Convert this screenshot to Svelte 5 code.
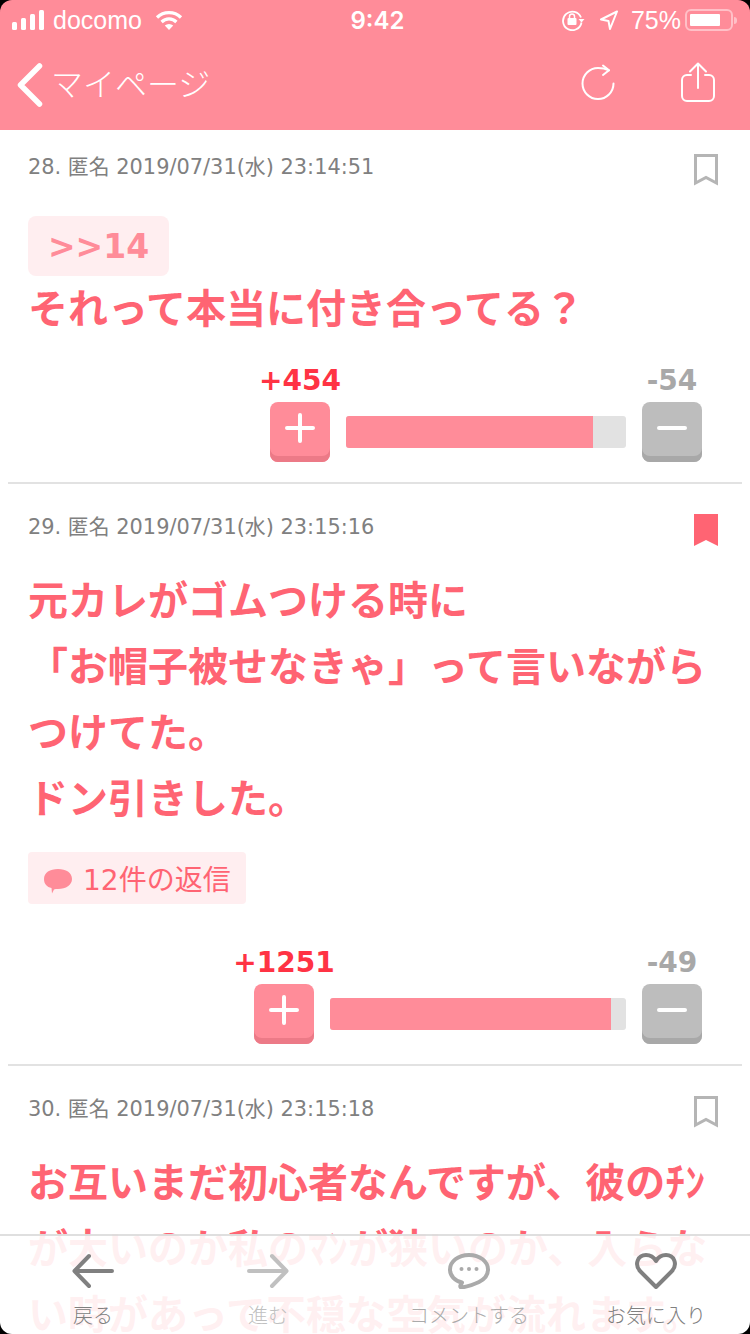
<script>
	const posts = [
		{
			meta: '28. 匿名 2019/07/31(水) 23:14:51',
			saved: false,
			quote: '>>14',
			lines: ['それって本当に付き合ってる？'],
			plus: 454,
			minus: 54,
			barWidth: 280,
			ratio: 88.2
		},
		{
			meta: '29. 匿名 2019/07/31(水) 23:15:16',
			saved: true,
			lines: ['元カレがゴムつける時に', '「お帽子被せなきゃ」って言いながら', 'つけてた。', 'ドン引きした。'],
			replies: 12,
			plus: 1251,
			minus: 49,
			barWidth: 296,
			ratio: 95
		},
		{
			meta: '30. 匿名 2019/07/31(水) 23:15:18',
			saved: false,
			lines: ['お互いまだ初心者なんですが、彼のﾁﾝが大いのか私のﾏﾝが狭いのか、入らない時があって不穏な空気が流れます。']
		}
	];
</script>

<div class="phone">
	<header class="head">
		<div class="status">
			<div class="status-left">
				<svg width="32" height="20" viewBox="0 0 32 20" fill="#fff">
					<rect x="0" y="12" width="5" height="8" rx="1.5" />
					<rect x="9" y="8" width="5" height="12" rx="1.5" />
					<rect x="18" y="4" width="5" height="16" rx="1.5" />
					<rect x="27" y="0" width="5" height="20" rx="1.5" />
				</svg>
				<span class="carrier">docomo</span>
				<svg class="wifi" width="28" height="20" viewBox="0 0 28 20" fill="none" stroke="#fff" stroke-width="3.2">
					<path d="M2 7.5a17 17 0 0 1 24 0" />
					<path d="M6.6 12a10.5 10.5 0 0 1 14.8 0" />
					<path d="M14 20l-4.2-4.4a6 6 0 0 1 8.4 0z" fill="#fff" stroke="none" />
				</svg>
			</div>
			<div class="time">9:42</div>
			<div class="status-right">
				<svg width="24" height="22" viewBox="0 0 24 22" fill="none" stroke="#fff" stroke-width="1.8">
					<path d="M20 8.500a9.300 9.300 0 1 0 .5 5" />
					<path d="M17.500 10h6l-3 3.500z" fill="#fff" stroke="none" />
					<rect x="6.500" y="9" width="9" height="7" rx="1" fill="#fff" stroke="none" />
					<path d="M8.500 9V7.500a2.500 2.500 0 0 1 5 0V9" stroke-width="1.500" />
				</svg>
				<svg class="loc" width="18" height="20" viewBox="0 0 18 20" fill="none" stroke="#fff" stroke-width="2" stroke-linejoin="round">
					<path d="M17 1.500L1 9.500l7.500 1.500 1.500 8z" />
				</svg>
				<span class="pct">75%</span>
				<div class="battery"><div class="battery-fill"></div></div>
				<div class="battery-nub"></div>
			</div>
		</div>
		<nav class="nav">
			<svg class="chev" width="26" height="44" viewBox="0 0 26 44" fill="none" stroke="#fff" stroke-width="5.500" stroke-linecap="round" stroke-linejoin="round">
				<path d="M22.500 3L3.500 22l19 19" />
			</svg>
			<span class="nav-title">マイページ</span>
			<svg class="reload" width="36" height="36" viewBox="0 0 36 36" fill="none" stroke="#fff" stroke-width="2" stroke-linecap="round" stroke-linejoin="round">
				<path d="M29 6.300Q24 4 18 4A15.500 15.500 0 1 0 33.500 19.500" />
				<path d="M23 1.500l6 4.800-6 4.700" />
			</svg>
			<svg class="share" width="34" height="40" viewBox="0 0 34 40" fill="none" stroke="#fff" stroke-width="2" stroke-linecap="round" stroke-linejoin="round">
				<path d="M10 13H6a5 5 0 0 0-5 5v16a5 5 0 0 0 5 5h22a5 5 0 0 0 5-5V18a5 5 0 0 0-5-5h-4" />
				<path d="M17 26V2M9 9.500L17 1.500l8 8" />
			</svg>
		</nav>
	</header>

	{#each posts as post}
		<article class="post">
			<div class="meta-row">
				<span class="meta">{post.meta}</span>
				<svg class="mark" width="24" height="32" viewBox="0 0 24 32">
					{#if post.saved}
						<path d="M0 0h24v32l-12-6-12 6z" fill="#ff6473" />
					{:else}
						<path d="M1.500 1.500h21v27.500l-10.500-5.500-10.500 5.500z" fill="none" stroke="#b5b5b5" stroke-width="3" />
					{/if}
				</svg>
			</div>
			<div class="content">
				{#if post.quote}
					<div class="quote">{post.quote}</div>
				{/if}
				<p class="body">
					{#each post.lines as line, i}
						{#if i > 0}<br />{/if}{line}
					{/each}
				</p>
				{#if post.replies}
					<div class="replies">
						<svg width="28" height="25" viewBox="0 0 28 25">
							<path d="M14 0c8 0 14 3.500 14 10 0 6-6 10-14 10-1.500 0-3 0-4 .5L8 24.500l-.5-5.500C3 18 0 15 0 10 0 3.500 6 0 14 0z" fill="#ff8c99" />
						</svg>
						<span>{post.replies}件の返信</span>
					</div>
				{/if}
			</div>
			{#if post.plus}
				<div class="votes">
					<div class="vote">
						<span class="count count-plus">+{post.plus}</span>
						<div class="btn btn-plus">
							<svg width="32" height="32" viewBox="0 0 32 32" stroke="#fff" stroke-width="4" stroke-linecap="round">
								<path d="M16 3v26M3 16h26" />
							</svg>
						</div>
					</div>
					<div class="bar" style="width: {post.barWidth}px">
						<div class="bar-fill" style="width: {post.ratio}%"></div>
					</div>
					<div class="vote">
						<span class="count count-minus">-{post.minus}</span>
						<div class="btn btn-minus">
							<svg width="32" height="32" viewBox="0 0 32 32" stroke="#fff" stroke-width="4" stroke-linecap="round">
								<path d="M3 16h26" />
							</svg>
						</div>
					</div>
				</div>
			{/if}
		</article>
	{/each}

	<footer class="tabs">
		<div class="tab tab-dark">
			<svg width="42" height="34" viewBox="0 0 42 34" fill="none" stroke="currentColor" stroke-width="4" stroke-linecap="round" stroke-linejoin="round">
				<path d="M40 17H3M17 2L2.500 17 17 32" />
			</svg>
			<span>戻る</span>
		</div>
		<div class="tab tab-off">
			<svg width="42" height="34" viewBox="0 0 42 34" fill="none" stroke="currentColor" stroke-width="4" stroke-linecap="round" stroke-linejoin="round">
				<path d="M2 17h37M25 2l14.500 15L25 32" />
			</svg>
			<span>進む</span>
		</div>
		<div class="tab tab-mid">
			<svg width="42" height="36" viewBox="0 0 42 36" fill="none">
				<path d="M21 2c11 0 19 6.500 19 14.500 0 6-4 10-9 12.500-4 2-10 4-17 5.500-1.500.3-2-1-1.500-2l1.500-3C7 28 2 23 2 16.500 2 8.500 10 2 21 2z" stroke="currentColor" stroke-width="4" stroke-linejoin="round" />
				<circle cx="13.500" cy="16" r="2" fill="currentColor" />
				<circle cx="21" cy="16" r="2" fill="currentColor" />
				<circle cx="28.500" cy="16" r="2" fill="currentColor" />
			</svg>
			<span>コメントする</span>
		</div>
		<div class="tab tab-dark">
			<svg width="42" height="36" viewBox="0 0 42 36" fill="none" stroke="currentColor" stroke-width="4" stroke-linejoin="round">
				<path d="M21 34L5 18C-1 11 3 2 11 2c4.500 0 8 2.500 10 6 2-3.500 5.500-6 10-6 8 0 12 9 6 16z" />
			</svg>
			<span>お気に入り</span>
		</div>
	</footer>

	<div class="corners"></div>
</div>

<style>
	:global(body) {
		margin: 0;
		background: #fff;
	}

	.phone {
		position: relative;
		width: 750px;
		height: 1334px;
		overflow: hidden;
		background: #fff;
		font-family: 'DejaVu Sans', 'Noto Sans CJK JP', sans-serif;
	}

	/* header */
	.head {
		height: 130px;
		background: #ff8c99;
		color: #fff;
	}

	.status {
		display: grid;
		grid-template-columns: 1fr auto 1fr;
		align-items: center;
		height: 40px;
		padding: 0 7px 0 12px;
		box-sizing: border-box;
		font-family: 'Liberation Sans', sans-serif;
	}

	.status-left {
		display: flex;
		align-items: center;
	}

	.carrier {
		margin-left: 9px;
		font-size: 25px;
	}

	.wifi {
		margin-left: 13px;
	}

	.time {
		font-family: Inter, sans-serif;
		font-size: 24px;
		font-weight: 600;
	}

	.status-right {
		display: flex;
		align-items: center;
		justify-content: flex-end;
		margin-right: 6px;
	}

	.loc {
		margin-left: 15px;
	}

	.pct {
		margin-left: 13px;
		font-size: 25px;
	}

	.battery {
		width: 48px;
		height: 22px;
		margin-left: 4px;
		padding: 3px;
		box-sizing: border-box;
		border: 2px solid rgba(255, 255, 255, 0.45);
		border-radius: 6px;
	}

	.battery-fill {
		width: 30px;
		height: 100%;
		background: #fff;
		border-radius: 1px;
	}

	.battery-nub {
		width: 3px;
		height: 7px;
		margin-left: 1px;
		background: rgba(255, 255, 255, 0.45);
		border-radius: 0 3px 3px 0;
	}

	.nav {
		display: flex;
		align-items: center;
		height: 90px;
		padding-left: 17px;
	}

	.nav-title {
		margin: 0 0 7px 8px;
		font-family: 'Noto Sans CJK JP', sans-serif;
		font-size: 32px;
		font-weight: 300;
	}

	.reload {
		margin: 0 0 6px auto;
	}

	.share {
		margin: 0 35px 6px 65px;
	}

	/* posts */
	.post {
		margin: 0 8px;
		padding: 0 20px;
		border-bottom: 2px solid #e2e2e2;
	}

	.post:last-of-type {
		border-bottom: 0;
	}

	.meta-row {
		display: flex;
		align-items: flex-start;
		justify-content: space-between;
		height: 62px;
		margin-right: 4px;
		padding-top: 24px;
	}

	.post + .post .meta-row {
		height: 51px;
		padding-top: 30px;
	}

	.meta {
		margin-top: -1px;
		font-size: 20.9px;
		line-height: 28px;
		color: #808080;
	}

	.content {
		font-family: 'Noto Sans CJK JP', sans-serif;
	}

	.quote {
		display: flex;
		align-items: center;
		justify-content: center;
		width: 141px;
		height: 60px;
		margin-bottom: -3px;
		border-radius: 8px;
		background: #ffeef0;
		color: #ff8c99;
		font-family: 'DejaVu Sans', sans-serif;
		font-size: 33px;
		font-weight: 700;
	}

	.body {
		margin: 0;
		color: #ff6473;
		font-size: 40px;
		font-weight: 700;
		line-height: 66px;
	}

	.replies {
		display: flex;
		align-items: center;
		width: 218px;
		height: 52px;
		margin: 23px 0 43px;
		padding-left: 16px;
		box-sizing: border-box;
		border-radius: 4px;
		background: #ffeef0;
		color: #ff6473;
		font-family: 'DejaVu Sans', 'Noto Sans CJK JP', sans-serif;
		font-size: 28px;
	}

	.replies svg {
		margin: 6px 11px 0 0;
	}

	.votes {
		display: flex;
		align-items: flex-end;
		justify-content: flex-end;
		gap: 16px;
		margin-top: 26px;
		padding: 0 20px 20px 0;
	}

	.vote {
		display: flex;
		flex-direction: column;
		align-items: center;
		width: 60px;
	}

	.count {
		height: 37px;
		font-size: 28px;
		font-weight: 700;
		line-height: 32px;
		white-space: nowrap;
	}

	.count-plus {
		color: #ff3344;
	}

	.count-minus {
		color: #a8a8a8;
	}

	.btn {
		display: flex;
		align-items: center;
		justify-content: center;
		width: 60px;
		height: 60px;
		padding-bottom: 8px;
		box-sizing: border-box;
		border-radius: 8px;
	}

	.btn-plus {
		background: #ff8c99;
		box-shadow: inset 0 -6px 0 #ec7a87;
	}

	.btn-minus {
		background: #bdbdbd;
		box-shadow: inset 0 -6px 0 #a8a8a8;
	}

	.bar {
		height: 32px;
		margin-bottom: 14px;
		border-radius: 3px;
		background: #e2e2e2;
		overflow: hidden;
	}

	.bar-fill {
		height: 100%;
		background: #ff8c99;
	}

	/* bottom tabs */
	.tabs {
		position: absolute;
		left: 0;
		right: 0;
		bottom: 0;
		display: grid;
		grid-template-columns: 186px 164px 238px 136px;
		height: 100px;
		box-sizing: border-box;
		border-top: 2px solid rgba(210, 210, 210, 0.7);
		background: rgba(255, 255, 255, 0.9);
		font-family: 'Noto Sans CJK JP', sans-serif;
	}

	.tab {
		display: flex;
		flex-direction: column;
		align-items: center;
		padding-top: 17px;
		font-size: 20px;
		font-weight: 300;
		line-height: 28px;
	}

	.tab svg {
		height: 36px;
		margin-bottom: 12px;
	}

	.tab span {
		white-space: nowrap;
	}

	.tab-dark {
		color: #808080;
	}

	.tab-off {
		color: #c0c0c0;
	}

	.tab-mid {
		color: #aaa;
	}

	/* rounded screen corners */
	.corners {
		position: absolute;
		inset: 0;
		border-radius: 12px;
		box-shadow: 0 0 0 20px #000;
		pointer-events: none;
	}
</style>
